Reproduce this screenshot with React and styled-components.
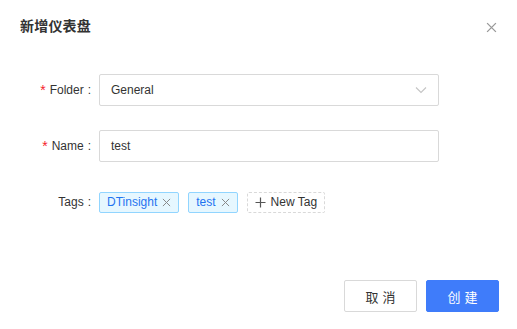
import React from "react"
import styled, { createGlobalStyle } from "styled-components"

const Global = createGlobalStyle`
  body {
    margin: 0;
    background: #fff;
    font-family: "Liberation Sans", Arial, "Noto Sans CJK SC", sans-serif;
  }
`

const Modal = styled.div`
  width: 517px;
  height: 329px;
  display: flex;
  flex-direction: column;
  background: #fff;
  color: #333;
`

const Header = styled.div`
  height: 50px;
  display: flex;
  align-items: center;
  justify-content: space-between;
  padding: 0 20px;
  box-sizing: border-box;
`

const Title = styled.div`
  font-size: 14px;
  font-weight: bold;
  color: #333;
  font-family: "Noto Sans CJK SC", sans-serif;
  letter-spacing: 0.2px;
`

const Close = styled.button`
  border: 0;
  background: none;
  padding: 0;
  width: 16px;
  height: 16px;
  display: flex;
  align-items: center;
  justify-content: center;
  margin-right: -2px;
  margin-top: 4px;
  cursor: pointer;
`

const Body = styled.div`
  flex: 1;
  padding: 24px 78px 0 20px;
  display: flex;
  flex-direction: column;
  gap: 24px;
`

const Row = styled.div`
  display: flex;
  align-items: center;
  height: 32px;
`

const Label = styled.label`
  width: 71px;
  margin-right: 8px;
  text-align: right;
  font-size: 12px;
  color: #333;
  white-space: nowrap;

  &::before {
    content: ${p => (p.required ? '"*"' : '""')};
    color: #f5222d;
    margin-right: 4px;
    font-size: 14px;
    vertical-align: -1px;
  }

  &::after {
    content: ":";
    margin-left: 4px;
  }
`

const Field = styled.div`
  flex: 1;
  height: 32px;
  box-sizing: border-box;
  border: 1px solid #d9d9d9;
  border-radius: 2px;
  display: flex;
  align-items: center;
  justify-content: space-between;
  padding: 0 11px;
  font-size: 12px;
  color: #333;
`

const Tags = styled.div`
  display: flex;
  align-items: center;
  gap: 9px;
`

const Tag = styled.span`
  height: 21px;
  box-sizing: border-box;
  display: inline-flex;
  align-items: center;
  gap: 5px;
  padding: 0 7px;
  font-size: 12px;
  border-radius: 2px;
  color: ${p => (p.dashed ? "#333" : "#1f74f0")};
  background: ${p => (p.dashed ? "#fff" : "#e6f7ff")};
  border: 1px ${p => (p.dashed ? "dashed #d9d9d9" : "solid #91d5ff")};
`

const Footer = styled.div`
  display: flex;
  justify-content: flex-end;
  gap: 9px;
  padding: 0 18px 17px;
`

const Button = styled.button`
  width: 73px;
  height: 32px;
  box-sizing: border-box;
  border-radius: 2px;
  font-size: 13px;
  font-family: "Noto Sans CJK SC", sans-serif;
  letter-spacing: 4px;
  text-indent: 4px;
  border: 1px solid ${p => (p.primary ? "#3f7cfa" : "#d9d9d9")};
  background: ${p => (p.primary ? "#3f7cfa" : "#fff")};
  color: ${p => (p.primary ? "#fff" : "#333")};
  cursor: pointer;
`

const X = ({ size = 10, color = "#999", width = 1.2 }) => (
  <svg width={size} height={size} viewBox="0 0 10 10">
    <path d="M1 1L9 9M9 1L1 9" stroke={color} strokeWidth={width} fill="none" />
  </svg>
)

const Chevron = () => (
  <svg width="12" height="8" viewBox="0 0 12 8">
    <path d="M1 1.5L6 6.5L11 1.5" stroke="#c4c4c4" strokeWidth="1.1" fill="none" />
  </svg>
)

const Plus = () => (
  <svg width="11" height="11" viewBox="0 0 11 11">
    <path d="M5.5 0.5V10.5M0.5 5.5H10.5" stroke="#555" strokeWidth="1.2" fill="none" />
  </svg>
)

export default function App() {
  return (
    <>
      <Global />
      <Modal>
        <Header>
          <Title>新增仪表盘</Title>
          <Close aria-label="close">
            <X size={11} color="#999" />
          </Close>
        </Header>
        <Body>
          <Row>
            <Label required>Folder</Label>
            <Field>
              General
              <Chevron />
            </Field>
          </Row>
          <Row>
            <Label required>Name</Label>
            <Field>test</Field>
          </Row>
          <Row>
            <Label>Tags</Label>
            <Tags>
              <Tag>DTinsight<X size={9} color="#888" width={1.1} /></Tag>
              <Tag>test<X size={9} color="#888" width={1.1} /></Tag>
              <Tag dashed><Plus />New Tag</Tag>
            </Tags>
          </Row>
        </Body>
        <Footer>
          <Button>取消</Button>
          <Button primary>创建</Button>
        </Footer>
      </Modal>
    </>
  )
}
